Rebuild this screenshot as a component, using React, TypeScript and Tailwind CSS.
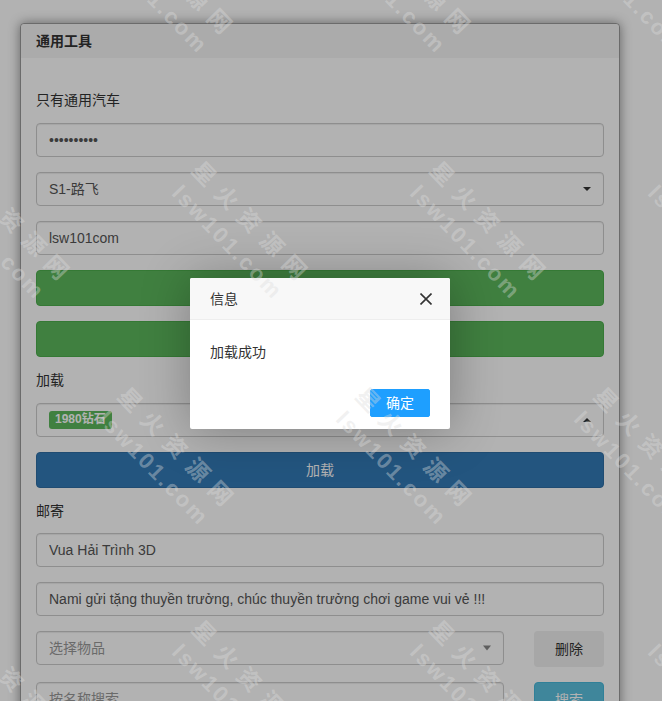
import React from "react";

const FONT = "font-['Liberation_Sans','Noto_Sans_CJK_SC',sans-serif]";

// watermark tiles: rows alternate their x offset
const rows = [
  { y: -90, x: 131 },
  { y: 156, x: 206 },
  { y: 382, x: 132 },
  { y: 615, x: 206 },
];
const marks: { x: number; y: number }[] = [];
rows.forEach((r) => {
  for (let k = -1; k <= 2; k++) marks.push({ x: r.x + k * 238, y: r.y });
});

function Caret({ up, gray }: { up?: boolean; gray?: boolean }) {
  return (
    <span
      className={
        "absolute right-[12px] top-1/2 -translate-y-1/2 h-0 w-0 border-x-4 border-x-transparent " +
        (gray ? "border-t-[5px] border-t-[#888]" : up ? "border-b-4 border-b-[#333]" : "border-t-4 border-t-[#333]")
      }
    />
  );
}

const inputCls =
  "block w-full h-[34px] rounded-[4px] border border-[#ccc] bg-white px-[12px] text-[14px] text-[#555] shadow-[inset_0_1px_1px_rgba(0,0,0,0.075)] outline-none";

export default function App() {
  return (
    <div className={`relative h-[701px] overflow-hidden bg-white text-[14px] leading-[20px] text-[#333] ${FONT}`}>
      <div className="pl-[20px] pt-[23px]">
        <div className="w-[600px] rounded-[4px] border border-[#9a9a9a] bg-white shadow-[0_0_12px_rgba(0,0,0,0.45)]">
          <div className="rounded-t-[4px] bg-[#f5f5f5] px-[15px] py-[7px] font-bold">通用工具</div>

          <div className="px-[15px] pt-[32px] pb-[15px]">
            <label className="block">只有通用汽车</label>
            <input type="password" readOnly value="1234567890" className={`${inputCls} mt-[13px]`} />

            <div className={`${inputCls} relative mt-[15px] flex items-center text-[#333]`}>
              S1-路飞
              <Caret />
            </div>

            <input readOnly value="lsw101com" className={`${inputCls} mt-[15px]`} />

            <button className="mt-[15px] block h-[36px] w-full rounded-[4px] border border-[#4cae4c] bg-[#5cb85c] text-white">
              登录
            </button>
            <button className="mt-[15px] block h-[36px] w-full rounded-[4px] border border-[#4cae4c] bg-[#5cb85c] text-white">
              获取
            </button>

            <label className="mt-[13px] block">加载</label>
            <div className={`${inputCls} relative mt-[13px] flex items-center`}>
              <span className="rounded-[3px] bg-[#5cb85c] px-[6px] pt-[2px] pb-[4px] text-[12px] leading-[12px] font-bold text-white">
                1980钻石
              </span>
              <Caret up />
            </div>

            <button className="mt-[15px] block h-[36px] w-full rounded-[4px] border border-[#2e6da4] bg-[#337ab7] text-white">
              加载
            </button>

            <label className="mt-[13px] block">邮寄</label>
            <input readOnly value="Vua Hải Trình 3D" className={`${inputCls} mt-[12px]`} />
            <input
              readOnly
              value="Nami gửi tặng thuyền trưởng, chúc thuyền trưởng chơi game vui vẻ !!!"
              className={`${inputCls} mt-[15px]`}
            />

            <div className="mt-[15px] flex items-start gap-[30px]">
              <div className={`${inputCls} relative flex flex-1 items-center text-[#999]`}>
                选择物品
                <Caret gray />
              </div>
              <button className="h-[36px] w-[70px] rounded-[4px] bg-[#efefef] text-[#333]">删除</button>
            </div>

            <div className="mt-[15px] flex items-start gap-[30px]">
              <input readOnly placeholder="按名称搜索" className={`${inputCls} flex-1 placeholder:text-[#999]`} />
              <button className="h-[36px] w-[70px] rounded-[4px] border border-[#46b8da] bg-[#5bc0de] text-white">搜索</button>
            </div>
            <div className="h-[200px]" />
          </div>
        </div>
      </div>

      {/* shade */}
      <div className="absolute inset-0 bg-black/30" />

      {/* layer dialog */}
      <div className="absolute left-[190px] top-[278px] w-[260px] rounded-[2px] bg-white shadow-[1px_1px_50px_rgba(0,0,0,0.3)]">
        <div className="relative h-[42px] rounded-t-[2px] border-b border-[#eee] bg-[#f8f8f8] pl-[20px] leading-[42px] text-[#333]">
          信息
          <svg className="absolute right-[18px] top-[15px]" width="12" height="12" viewBox="0 0 12 12">
            <path d="M0.5 0.5 L11.5 11.5 M11.5 0.5 L0.5 11.5" stroke="#333" strokeWidth="1.6" />
          </svg>
        </div>
        <div className="p-[20px] leading-[24px] text-[#333]">加载成功</div>
        <div className="px-[15px] pb-[12px] text-right">
          <span className="mx-[5px] mt-[5px] inline-block h-[28px] rounded-[2px] border border-[#1e9fff] bg-[#1e9fff] px-[15px] leading-[26px] text-white">
            确定
          </span>
        </div>
      </div>

      {/* watermark */}
      {marks.map((m, i) => (
        <div
          key={i}
          className="pointer-events-none absolute origin-top-left rotate-[46deg] whitespace-nowrap text-[rgba(220,220,220,0.4)]"
          style={{ left: m.x, top: m.y }}
        >
          <div className="text-[23px] leading-[28px] font-bold tracking-[9.5px]">星火资源网</div>
          <div className="ml-[3px] mt-[3px] text-[22px] leading-[28px] font-bold tracking-[2.5px]">lsw101.com</div>
        </div>
      ))}
    </div>
  );
}
